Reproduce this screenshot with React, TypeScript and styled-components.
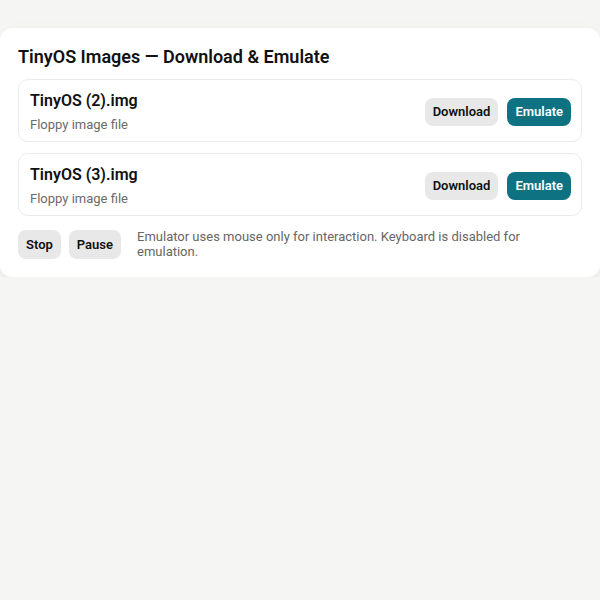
import styled, { createGlobalStyle } from "styled-components";

const GlobalStyle = createGlobalStyle`
  html, body {
    margin: 0;
    padding: 0;
    background: #f5f5f4;
    font-family: Roboto, "Liberation Sans", sans-serif;
    color: #111;
  }
`;

const Page = styled.div`
  padding-top: 28px;
`;

const Card = styled.section`
  background: #fff;
  border-radius: 12px;
  box-shadow: 0 4px 14px rgba(0, 0, 0, 0.06);
  padding: 18px;
  display: flex;
  flex-direction: column;
  gap: 11px;
`;

const Title = styled.h2`
  margin: 0;
  font-size: 18px;
  font-weight: 600;
  line-height: 22px;
`;

const Item = styled.div`
  border: 1px solid #ebebeb;
  border-radius: 10px;
  padding: 11px 10px 8px 11px;
  display: flex;
  align-items: center;
  justify-content: space-between;
`;

const Info = styled.div`
  display: flex;
  flex-direction: column;
  gap: 6px;
`;

const Name = styled.div`
  font-size: 16px;
  font-weight: 600;
  line-height: 19px;
`;

const Sub = styled.div`
  font-size: 13px;
  color: #6b6b6b;
  line-height: 17px;
`;

const Actions = styled.div`
  display: flex;
  gap: 9px;
`;

const Button = styled.button<{ $primary?: boolean }>`
  font-family: inherit;
  font-size: 13px;
  font-weight: 600;
  line-height: 16px;
  padding: 6px 8px;
  border: none;
  border-radius: 8px;
  cursor: pointer;
  background: ${(p) => (p.$primary ? "#0e7282" : "#e8e8e8")};
  color: ${(p) => (p.$primary ? "#fff" : "#111")};
`;

const Controls = styled.div`
  display: flex;
  align-items: center;
  gap: 8px;
  margin-top: 2px;
`;

const ControlButton = styled(Button)`
  line-height: 17px;
`;

const Note = styled.p`
  margin: 0 0 0 8px;
  font-size: 13px;
  line-height: 15px;
  color: #666;
  flex: 1;
`;

const files = ["TinyOS (2).img", "TinyOS (3).img"];

export default function App() {
  return (
    <Page>
      <GlobalStyle />
      <Card>
        <Title>TinyOS Images — Download &amp; Emulate</Title>
        {files.map((f) => (
          <Item key={f}>
            <Info>
              <Name>{f}</Name>
              <Sub>Floppy image file</Sub>
            </Info>
            <Actions>
              <Button>Download</Button>
              <Button $primary>Emulate</Button>
            </Actions>
          </Item>
        ))}
        <Controls>
          <ControlButton>Stop</ControlButton>
          <ControlButton>Pause</ControlButton>
          <Note>
            Emulator uses mouse only for interaction. Keyboard is disabled for
            emulation.
          </Note>
        </Controls>
      </Card>
    </Page>
  );
}
